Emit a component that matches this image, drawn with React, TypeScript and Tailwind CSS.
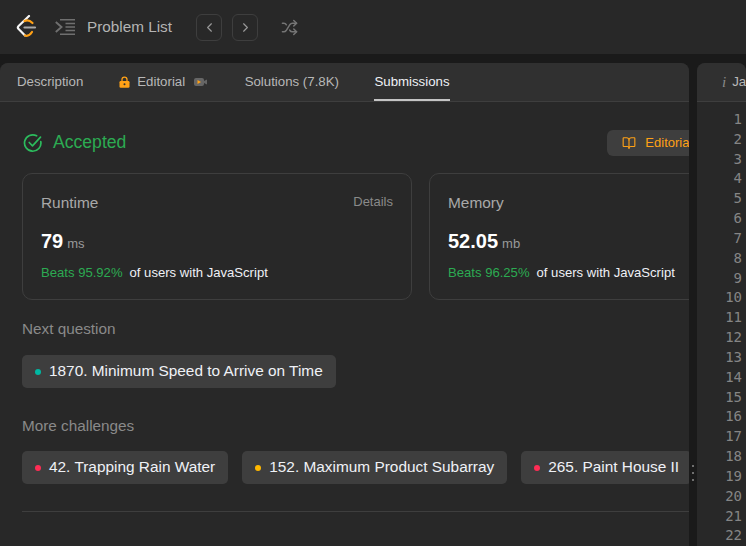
import React from "react";
import { BookOpen, ChevronLeft, ChevronRight, Shuffle } from "lucide-react";

const Chip = ({ dot, label }: { dot: string; label: string }) => (
  <div className="flex h-[33px] shrink-0 items-center rounded-[5px] bg-[#3e3e3e] px-[13px] text-[15.4px] text-[#eff1f6]">
    <span className={`mr-[8px] h-[6px] w-[6px] rounded-full ${dot}`} />
    <span className="pb-[2px]">{label}</span>
  </div>
);

const Card = ({ title, value, unit, beats, details }: { title: string; value: string; unit: string; beats: string; details?: boolean }) => (
  <div className="h-[127px] w-[390px] shrink-0 rounded-[10px] border border-[#3e3e3e] px-[18px] pt-[20px]">
    <div className="flex items-start justify-between">
      <span className="text-[15.4px] leading-[18px] text-[#a8a8a8]">{title}</span>
      {details && <span className="text-[13px] leading-[16px] text-[#8a8a8a]">Details</span>}
    </div>
    <div className="mt-[17px] flex items-baseline leading-[24px]">
      <span className="text-[20px] font-bold text-white">{value}</span>
      <span className="ml-[4px] text-[13px] text-[#9a9a9a]">{unit}</span>
    </div>
    <div className="mt-[7px] flex text-[13.1px] leading-[20px]">
      <span className="text-[#2cab52]">Beats {beats}</span>
      <span className="ml-[7px] text-[#eff1f6]">of users with JavaScript</span>
    </div>
  </div>
);

export default function App() {
  const lines = Array.from({ length: 22 }, (_, i) => i + 1);
  return (
    <div className="flex h-[546px] w-[746px] flex-col overflow-hidden bg-[#1a1a1a] font-['Liberation_Sans',sans-serif]">
      <header className="flex h-[54px] shrink-0 items-center bg-[#282828] pl-[16px]">
        <svg width="22" height="24" viewBox="0 0 22 24" fill="none" strokeLinecap="round" strokeLinejoin="round">
          <path d="M13 1 L2.6 11 C1.6 12 1.6 13 2.6 14 L9 20.5" stroke="#f5f5f5" strokeWidth="2.2" />
          <path d="M8.5 6 C11 4.8 14 5.5 16.5 8" stroke="#ffa116" strokeWidth="2.2" />
          <path d="M9 20.5 C11.5 21.5 14 20 16 17" stroke="#ffa116" strokeWidth="2.2" />
          <path d="M8.5 12.5 H19" stroke="#a8a8a8" strokeWidth="2.2" />
        </svg>
        <svg className="ml-[17px]" width="20" height="16" viewBox="0 0 20 16" fill="none" stroke="#6f6f6f" strokeWidth="1.5">
          <path d="M0.8 3 L6.5 8 L0.8 13" strokeWidth="1.9" />
          <path d="M5 0.8 H20 M10.5 4.4 H20 M10.5 8 H20 M10.5 11.6 H20 M5 15.2 H20" />
        </svg>
        <span className="ml-[12px] text-[15.3px] text-[#b4b4b4]">Problem List</span>
        <button className="ml-[24px] flex h-[27px] w-[26px] items-center justify-center rounded-[6px] border border-[#3e3e3e] text-[#9a9a9a]">
          <ChevronLeft size={15} strokeWidth={1.8} />
        </button>
        <button className="ml-[10px] flex h-[27px] w-[26px] items-center justify-center rounded-[6px] border border-[#3e3e3e] text-[#9a9a9a]">
          <ChevronRight size={15} strokeWidth={1.8} />
        </button>
        <Shuffle className="ml-[23px] text-[#757575]" size={17} strokeWidth={2.1} />
      </header>

      <div className="mt-[9px] flex min-h-0 flex-1">
        <section className="relative w-[689px] shrink-0 overflow-hidden rounded-t-[8px] bg-[#282828]">
          <nav className="flex h-[39px] items-stretch border-b border-[#3e3e3e] bg-[#303030] pl-[17px] text-[13.25px] text-[#b8b8b8]">
            <span className="flex items-center">Description</span>
            <span className="ml-[36px] flex items-center">
              <svg width="11" height="12" viewBox="0 0 11 12" className="mr-[7px]">
                <path d="M3 5.5 V3.6 a2.5 2.5 0 0 1 5 0 V5.5" fill="none" stroke="#ffa116" strokeWidth="1.3" />
                <rect x="0.5" y="5" width="10" height="6.8" rx="1.2" fill="#ffa116" />
                <circle cx="5.5" cy="8.2" r="1" fill="#303030" />
              </svg>
              Editorial
              <svg width="13" height="10" viewBox="0 0 13 10" className="ml-[9px]">
                <rect x="0" y="1" width="10" height="8" rx="2" fill="#666" />
                <path d="M10 4 L13 2.5 V7.5 L10 6 Z" fill="#666" />
                <path d="M3.5 3 L7 5 L3.5 7 Z" fill="#ffa116" />
              </svg>
            </span>
            <span className="ml-[37.5px] flex items-center">Solutions (7.8K)</span>
            <span className="ml-[35.5px] flex items-center border-b-2 border-[#c4c4c4] pt-[2px] text-[#eff1f6]">Submissions</span>
          </nav>

          <div className="pl-[22px] pt-[27px]">
            <div className="flex h-[27px] w-[720px] items-center">
              <svg width="20" height="20" viewBox="0 0 20 20" fill="none" stroke="#2cbb5d" strokeWidth="1.7" strokeLinecap="round" strokeLinejoin="round" className="ml-[1px]">
                <path d="M17.8 8.6 A8.2 8.2 0 1 1 13.6 2.8" />
                <path d="M6.2 9.5 L9.5 12.8 L17.5 4.2" />
              </svg>
              <span className="ml-[10px] text-[17.6px] text-[#2cab52]">Accepted</span>
              <div className="ml-[481px] flex h-[26px] w-[110px] shrink-0 items-center rounded-[6px] bg-[#3e3e3e] pl-[15px] text-[13px] text-[#ffa116]">
                <BookOpen size={14} strokeWidth={1.9} className="mr-[9px]" />
                Editorial
              </div>
            </div>

            <div className="mt-[17px] flex gap-[17px]">
              <Card title="Runtime" value="79" unit="ms" beats="95.92%" details />
              <Card title="Memory" value="52.05" unit="mb" beats="96.25%" />
            </div>

            <h3 className="mt-[19px] text-[15.3px] font-normal leading-[20px] text-[#8a8a8a]">Next question</h3>
            <div className="mt-[16px] flex">
              <Chip dot="bg-[#00b8a3]" label="1870. Minimum Speed to Arrive on Time" />
            </div>

            <h3 className="mt-[28px] text-[15.3px] font-normal leading-[20px] text-[#8a8a8a]">More challenges</h3>
            <div className="mt-[15px] flex gap-[14px]">
              <Chip dot="bg-[#ff2d55]" label="42. Trapping Rain Water" />
              <Chip dot="bg-[#ffb800]" label="152. Maximum Product Subarray" />
              <Chip dot="bg-[#ff2d55]" label="265. Paint House II" />
            </div>

            <div className="mt-[27px] h-px bg-[#3e3e3e]" />
          </div>
        </section>

        <div className="flex w-[8px] shrink-0 flex-col items-center justify-center pt-[22px]">
          <div className="mt-[314px] flex flex-col gap-[5px]">
            <span className="h-[2px] w-[2px] bg-[#6f6f6f]" />
            <span className="h-[2px] w-[2px] bg-[#6f6f6f]" />
            <span className="h-[2px] w-[2px] bg-[#6f6f6f]" />
          </div>
        </div>

        <section className="min-w-0 flex-1 overflow-hidden rounded-t-[8px] bg-[#282828]">
          <div className="flex h-[39px] items-center border-b border-[#3e3e3e] bg-[#303030] pl-[25px] text-[13.3px] text-[#b8b8b8]">
            <span className="mr-[6px] font-['Liberation_Serif',serif] text-[15px] italic text-[#8a8a8a]">i</span>
            <span>JavaScript</span>
          </div>
          <div className="flex w-[45px] flex-col items-end pt-[8px] font-['DejaVu_Sans_Mono',monospace] text-[14px] leading-[19.83px] text-[#858585]">
            {lines.map((n) => (
              <span key={n}>{n}</span>
            ))}
          </div>
        </section>
      </div>
    </div>
  );
}
